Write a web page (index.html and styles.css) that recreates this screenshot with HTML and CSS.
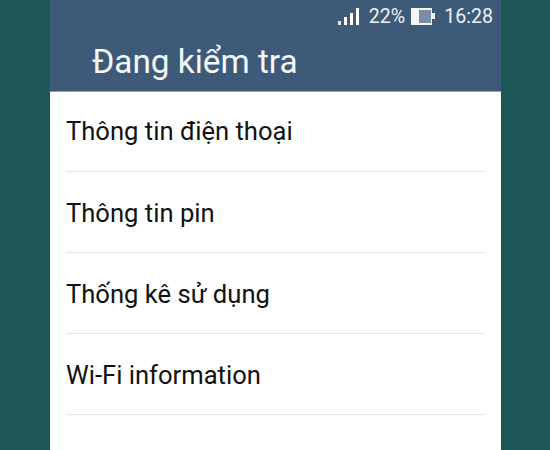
FILE: index.html
```html
<!DOCTYPE html>
<html lang="vi">
<head>
<meta charset="utf-8">
<title>Đang kiểm tra</title>
<link rel="stylesheet" href="styles.css">
</head>
<body>
<main class="phone">
  <header class="appbar">
    <div class="status">
      <svg class="signal" width="21" height="17" viewBox="0 0 21 17"><rect x="0" y="13" width="3" height="4" fill="#fff" opacity=".85"/><rect x="6" y="9" width="3" height="8" fill="#fff"/><rect x="12" y="5" width="3" height="12" fill="#fff"/><rect x="18" y="0" width="3" height="17" fill="#fff"/></svg>
      <span class="pct">22%</span>
      <svg class="battery" width="24" height="17" viewBox="0 0 24 17"><rect x="0" y="0" width="21" height="17" fill="#f4f6f8"/><rect x="8" y="2" width="12" height="13" fill="#7b8da6"/><rect x="21" y="5" width="3" height="6" fill="#f4f6f8"/></svg>
      <span class="time">16:28</span>
    </div>
    <h1 class="title">Đang kiểm tra</h1>
  </header>
  <ul class="list">
    <li class="item">Thông tin điện thoại</li>
    <li class="item">Thông tin pin</li>
    <li class="item">Thống kê sử dụng</li>
    <li class="item">Wi-Fi information</li>
  </ul>
</main>
</body>
</html>
```
FILE: styles.css
```css
html, body {
  margin: 0;
  height: 100%;
}
body {
  background: #1d5755;
  overflow: hidden;
  font-family: Roboto, "Noto Sans", sans-serif;
}
.phone {
  width: 451px;
  height: 450px;
  margin-left: 50px;
  background: #fff;
}
.appbar {
  height: 91px;
  background: #3d5a78;
  border-bottom: 1px solid #8b9db0;
  color: #fff;
}
.status {
  height: 32px;
  display: flex;
  justify-content: flex-end;
  align-items: center;
  padding-right: 8px;
  font-size: 19.6px;
  color: #eef1f4;
}
.signal { margin-right: 10px; }
.pct { margin-right: 6px; }
.battery { margin-right: 9px; }
.title {
  margin: 0;
  padding: 10px 0 0 42px;
  font-size: 33.3px;
  line-height: 40px;
  font-weight: 400;
  color: #f6f7f9;
}
.list {
  margin: 0 16px;
  padding: 0;
  list-style: none;
}
.item {
  height: 80px;
  line-height: 82px;
  border-bottom: 1px solid #e4e4e4;
  font-size: 25.6px;
  color: #111;
}
.item:first-child {
  height: 79px;
  line-height: 78px;
}
```
